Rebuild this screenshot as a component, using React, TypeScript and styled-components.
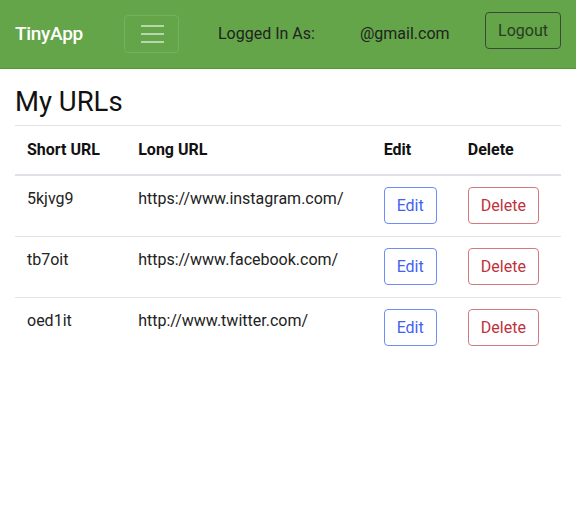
import React from "react";
import styled, { createGlobalStyle } from "styled-components";

const Global = createGlobalStyle`
  html, body { margin: 0; padding: 0; background: #fff; }
  body { font-family: Roboto, "Helvetica Neue", Arial, sans-serif; font-size: 16px; line-height: 1.5; color: #212529; }
  * { box-sizing: border-box; }
`;

const Nav = styled.nav`
  display: flex;
  align-items: center;
  height: 69px;
  padding: 0 15px;
  background: #63a548;
  border-bottom: 1px solid #4f9a33;
`;

const Brand = styled.a`
  color: #fff;
  font-size: 19px;
  font-weight: 500;
  letter-spacing: -0.3px;
  margin-right: 41px;
  text-decoration: none;
`;

const Toggler = styled.button`
  width: 55px;
  height: 38px;
  background: transparent;
  border: 1px solid rgba(255, 255, 255, 0.12);
  border-radius: 4px;
  display: flex;
  align-items: center;
  justify-content: center;
  padding: 0;
  margin-right: 39px;
`;

const NavText = styled.span<{ $gap: number }>`
  color: #222;
  font-size: 16px;
  margin-right: ${(p) => p.$gap}px;
`;

const Spacer = styled.div`
  flex: 1;
`;

const LogoutButton = styled.button`
  font-family: inherit;
  font-size: 16px;
  color: #2b3a25;
  background: transparent;
  border: 1px solid #3c4a35;
  border-radius: 4px;
  height: 37px;
  padding: 0 12px;
  margin-top: -7px;
`;

const Main = styled.main`
  padding: 0 15px;
`;

const Title = styled.h2`
  margin: 17px 0 8px;
  font-size: 27.5px;
  font-weight: 400;
  line-height: 31px;
  color: #111;
`;

const Rule = styled.hr`
  margin: 0;
  border: 0;
  border-top: 1px solid #e3e3e3;
`;

const Table = styled.table`
  width: 100%;
  border-collapse: collapse;
  table-layout: fixed;
`;

const Th = styled.th<{ $w: number }>`
  width: ${(p) => p.$w}px;
  text-align: left;
  font-weight: 700;
  padding: 12px;
  border-bottom: 2px solid #dee2e6;
  color: #111;
  vertical-align: bottom;
`;

const Td = styled.td`
  padding: 11px 12px 12px;
  vertical-align: top;
  color: #222;
  border-top: 1px solid #e3e3e3;
`;

const Row = styled.tr`
  &:first-child td { border-top: 0; }
`;

const OutlineButton = styled.button<{ $kind: "edit" | "delete" }>`
  font-family: inherit;
  font-size: 16px;
  line-height: 1.5;
  height: 37px;
  background: transparent;
  padding: 0 12px;
  border-radius: 4px;
  color: ${(p) => (p.$kind === "edit" ? "#3f62f2" : "#c0313c")};
  border: 1px solid ${(p) => (p.$kind === "edit" ? "#6f8cf8" : "#d37a7f")};
`;

const urls = [
  { short: "5kjvg9", long: "https://www.instagram.com/" },
  { short: "tb7oit", long: "https://www.facebook.com/" },
  { short: "oed1it", long: "http://www.twitter.com/" },
];

export default function App() {
  return (
    <>
      <Global />
      <Nav>
        <Brand href="#">TinyApp</Brand>
        <Toggler aria-label="Toggle navigation">
          <svg width="26" height="22" viewBox="0 0 26 22">
            <g stroke="rgba(255,255,255,0.55)" strokeWidth="2">
              <line x1="2" y1="3" x2="25" y2="3" />
              <line x1="2" y1="11" x2="25" y2="11" />
              <line x1="2" y1="19" x2="25" y2="19" />
            </g>
          </svg>
        </Toggler>
        <NavText $gap={45}>Logged In As:</NavText>
        <NavText $gap={0}>@gmail.com</NavText>
        <Spacer />
        <LogoutButton>Logout</LogoutButton>
      </Nav>
      <Main>
        <Title>My URLs</Title>
        <Rule />
        <Table>
          <thead>
            <tr>
              <Th $w={111}>Short URL</Th>
              <Th $w={245}>Long URL</Th>
              <Th $w={84}>Edit</Th>
              <Th $w={105}>Delete</Th>
            </tr>
          </thead>
          <tbody>
            {urls.map((u) => (
              <Row key={u.short}>
                <Td>{u.short}</Td>
                <Td>{u.long}</Td>
                <Td>
                  <OutlineButton $kind="edit">Edit</OutlineButton>
                </Td>
                <Td>
                  <OutlineButton $kind="delete">Delete</OutlineButton>
                </Td>
              </Row>
            ))}
          </tbody>
        </Table>
      </Main>
    </>
  );
}
